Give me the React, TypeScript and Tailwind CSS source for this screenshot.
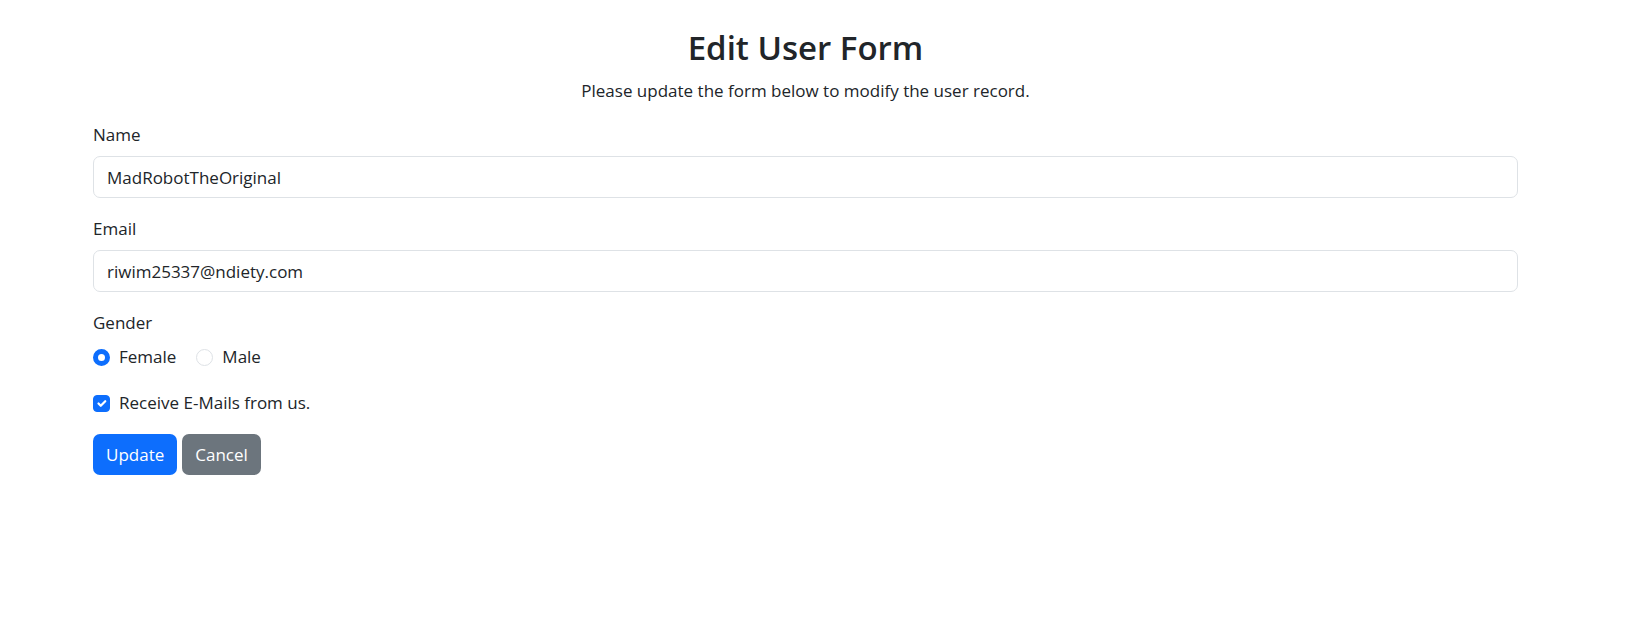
import type { InputHTMLAttributes } from "react";

type FieldProps = InputHTMLAttributes<HTMLInputElement> & { id: string; label: string };

function TextField({ id, label, ...rest }: FieldProps) {
  return (
    <div className="mb-[18px] flex flex-col items-start gap-2">
      <label htmlFor={id}>{label}</label>
      <input
        id={id}
        className="h-[42px] w-full rounded-[7px] border border-[#dee2e6] bg-white px-[13px] outline-none focus:border-[#86b7fe]"
        {...rest}
      />
    </div>
  );
}

function RadioOption({ id, label, ...rest }: FieldProps) {
  return (
    <div className="flex items-center gap-[9px]">
      <input
        id={id}
        type="radio"
        name="gender"
        className="size-[17px] appearance-none rounded-full border border-[#dee2e6] bg-white checked:border-[5px] checked:border-[#0d6efd]"
        {...rest}
      />
      <label htmlFor={id}>{label}</label>
    </div>
  );
}

export default function App() {
  return (
    <div className="bg-white pr-[29px] font-['Open_Sans','Noto_Sans',sans-serif] text-[17px] leading-[26px] text-[#212529]">
      <main className="mx-auto max-w-[1451px] px-[13px] pt-[27px]">
        <header className="mb-[18px] text-center">
          <h1 className="mb-[9px] text-[33px] leading-[42px] font-semibold">Edit User Form</h1>
          <p>Please update the form below to modify the user record.</p>
        </header>

        <form onSubmit={(e) => e.preventDefault()}>
          <TextField id="name" label="Name" type="text" defaultValue="MadRobotTheOriginal" />
          <TextField id="email" label="Email" type="email" defaultValue="riwim25337@ndiety.com" />

          <fieldset className="mb-5">
            <legend className="mb-2">Gender</legend>
            <div className="flex gap-5">
              <RadioOption id="female" label="Female" value="female" defaultChecked />
              <RadioOption id="male" label="Male" value="male" />
            </div>
          </fieldset>

          <div className="mb-[18px] flex items-center gap-[9px]">
            <span className="relative flex">
              <input
                id="newsletter"
                type="checkbox"
                defaultChecked
                className="peer size-[17px] appearance-none rounded-[4px] border border-[#dee2e6] bg-white checked:border-[#0d6efd] checked:bg-[#0d6efd]"
              />
              <svg
                viewBox="0 0 20 20"
                fill="none"
                stroke="#fff"
                strokeWidth="3"
                strokeLinecap="round"
                strokeLinejoin="round"
                className="pointer-events-none absolute inset-px hidden size-[15px] peer-checked:block"
                aria-hidden="true"
              >
                <path d="m6 10 3 3 6-6" />
              </svg>
            </span>
            <label htmlFor="newsletter">Receive E-Mails from us.</label>
          </div>

          <div className="flex gap-[5px]">
            <button type="submit" className="h-[41px] rounded-[7px] bg-[#0d6efd] px-[13px] text-white hover:bg-[#0b5ed7]">
              Update
            </button>
            <button type="button" className="h-[41px] rounded-[7px] bg-[#6c757d] px-[13px] text-white hover:bg-[#5c636a]">
              Cancel
            </button>
          </div>
        </form>
      </main>
    </div>
  );
}
